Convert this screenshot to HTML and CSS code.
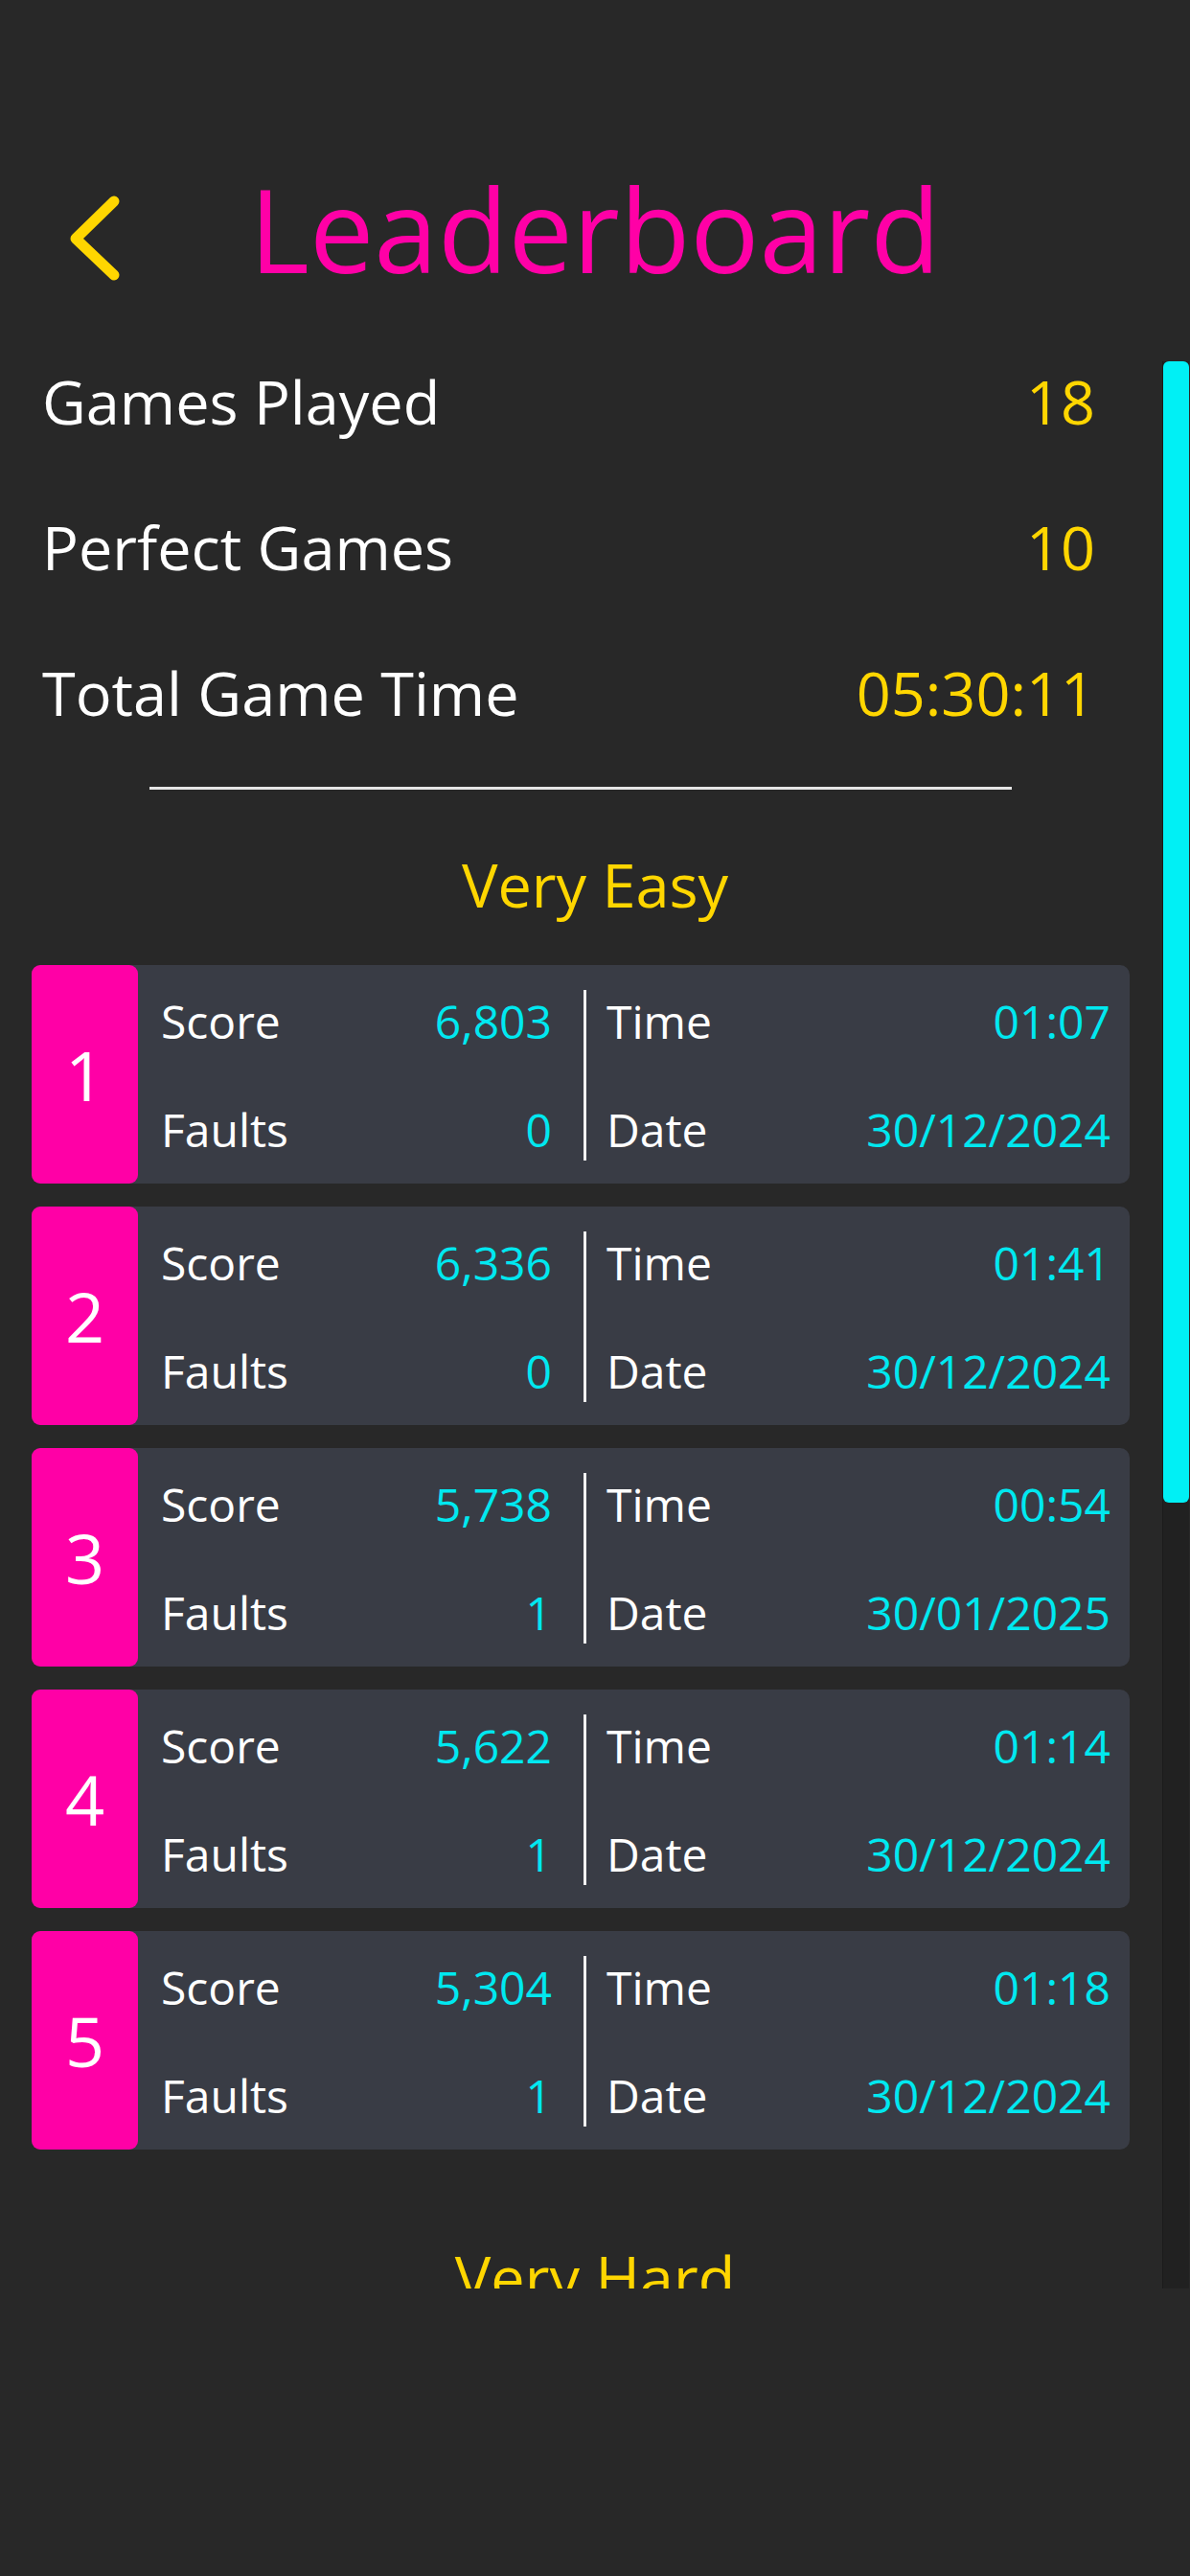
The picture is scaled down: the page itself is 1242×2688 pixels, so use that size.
FILE: index.html
```html
<!DOCTYPE html>
<html lang="en">
<head>
    <meta charset="UTF-8">
    <meta name="viewport" content="width=device-width, initial-scale=1.0">
    <title>Leaderboard</title>
    <link rel="stylesheet" href="styles.css">
</head>
<body>
    <header class="header">
        <a class="back" href="#">
            <svg width="60" height="100" viewBox="0 0 60 100">
                <polyline points="53,11 13,50 53,88" fill="none" stroke="#ffd600" stroke-width="11" stroke-linecap="round" stroke-linejoin="round"/>
            </svg>
        </a>
        <h1 class="title">Leaderboard</h1>
        <div></div>
    </header>

    <main class="scroller">
        <div class="content">
            <ul class="stats">
                <li><span>Games Played</span><span class="stat-value">18</span></li>
                <li><span>Perfect Games</span><span class="stat-value">10</span></li>
                <li><span>Total Game Time</span><span class="stat-value">05:30:11</span></li>
            </ul>

            <hr class="divider">

            <h2 class="level">Very Easy</h2>
            <div class="entries">
                <div class="entry">
                    <div class="rank">1</div>
                    <div class="col col-left">
                        <div class="line"><span>Score</span><span class="val">6,803</span></div>
                        <div class="line"><span>Faults</span><span class="val">0</span></div>
                    </div>
                    <div class="col col-right">
                        <div class="line"><span>Time</span><span class="val">01:07</span></div>
                        <div class="line"><span>Date</span><span class="val">30/12/2024</span></div>
                    </div>
                </div>
                <div class="entry">
                    <div class="rank">2</div>
                    <div class="col col-left">
                        <div class="line"><span>Score</span><span class="val">6,336</span></div>
                        <div class="line"><span>Faults</span><span class="val">0</span></div>
                    </div>
                    <div class="col col-right">
                        <div class="line"><span>Time</span><span class="val">01:41</span></div>
                        <div class="line"><span>Date</span><span class="val">30/12/2024</span></div>
                    </div>
                </div>
                <div class="entry">
                    <div class="rank">3</div>
                    <div class="col col-left">
                        <div class="line"><span>Score</span><span class="val">5,738</span></div>
                        <div class="line"><span>Faults</span><span class="val">1</span></div>
                    </div>
                    <div class="col col-right">
                        <div class="line"><span>Time</span><span class="val">00:54</span></div>
                        <div class="line"><span>Date</span><span class="val">30/01/2025</span></div>
                    </div>
                </div>
                <div class="entry">
                    <div class="rank">4</div>
                    <div class="col col-left">
                        <div class="line"><span>Score</span><span class="val">5,622</span></div>
                        <div class="line"><span>Faults</span><span class="val">1</span></div>
                    </div>
                    <div class="col col-right">
                        <div class="line"><span>Time</span><span class="val">01:14</span></div>
                        <div class="line"><span>Date</span><span class="val">30/12/2024</span></div>
                    </div>
                </div>
                <div class="entry">
                    <div class="rank">5</div>
                    <div class="col col-left">
                        <div class="line"><span>Score</span><span class="val">5,304</span></div>
                        <div class="line"><span>Faults</span><span class="val">1</span></div>
                    </div>
                    <div class="col col-right">
                        <div class="line"><span>Time</span><span class="val">01:18</span></div>
                        <div class="line"><span>Date</span><span class="val">30/12/2024</span></div>
                    </div>
                </div>
            </div>

            <h2 class="level level-next">Very Hard</h2>
        </div>

        <div class="scrollbar">
            <div class="thumb"></div>
        </div>
    </main>
</body>
</html>
```

FILE: styles.css
```css
body {
    font-family: "Open Sans", "Noto Sans", sans-serif;
    margin: 0;
    width: 1242px;
    height: 2688px;
    background-color: #282828;
    color: #fff;
}

.header {
    display: grid;
    grid-template-columns: 1fr auto 1fr;
    align-items: start;
    padding-top: 179px;
}

.back {
    display: block;
    width: 60px;
    height: 100px;
    margin: 20px 0 0 66px;
}

.back svg {
    display: block;
}

.title {
    margin: 0;
    font-size: 120px;
    font-weight: 400;
    line-height: 1;
    color: #ff00a6;
}

.scroller {
    position: relative;
    height: 2018px;
    margin-top: 71px;
    overflow: hidden;
}

.content {
    padding-top: 6px;
}

.stats {
    list-style: none;
    margin: 0;
    padding: 0 99px 0 44px;
    display: flex;
    flex-direction: column;
    gap: 67px;
}

.stats li {
    display: flex;
    justify-content: space-between;
    font-size: 63px;
}

.stat-value {
    color: #ffd600;
}

.divider {
    margin: 56px 186px 0 156px;
    height: 3px;
    border: 0;
    background-color: #e6e6e6;
}

.level {
    margin: 56px 0 0;
    font-size: 63px;
    font-weight: 400;
    text-align: center;
    color: #ffd600;
}

.level-next {
    margin-top: 90px;
}

.entries {
    display: flex;
    flex-direction: column;
    gap: 24px;
    margin: 42px 63px 0 33px;
}

.entry {
    display: grid;
    grid-template-columns: 111px 465px 1fr;
    height: 228px;
    background-color: #393c45;
    border-radius: 10px;
}

.rank {
    display: flex;
    align-items: center;
    justify-content: center;
    background-color: #ff00a6;
    border-radius: 9px;
    font-size: 72px;
    line-height: 1;
}

.col {
    display: flex;
    flex-direction: column;
    justify-content: space-between;
    margin: 26px 0 24px;
    padding: 9px 0 8px;
}

.col-left {
    padding-left: 24px;
    padding-right: 33px;
}

.col-right {
    border-left: 3px solid #f2f2f2;
    padding-left: 21px;
    padding-right: 20px;
}

.line {
    display: flex;
    justify-content: space-between;
    font-size: 48px;
    line-height: 1;
}

.val {
    color: #00e8f0;
}

.scrollbar {
    position: absolute;
    top: 7px;
    right: 1px;
    bottom: 0;
    width: 28px;
    background-color: #212121;
    border-left: 1px solid #1b1b1b;
    box-sizing: border-box;
}

.thumb {
    height: 1191px;
    background-color: #00f0f5;
    border-radius: 6px;
}
```
